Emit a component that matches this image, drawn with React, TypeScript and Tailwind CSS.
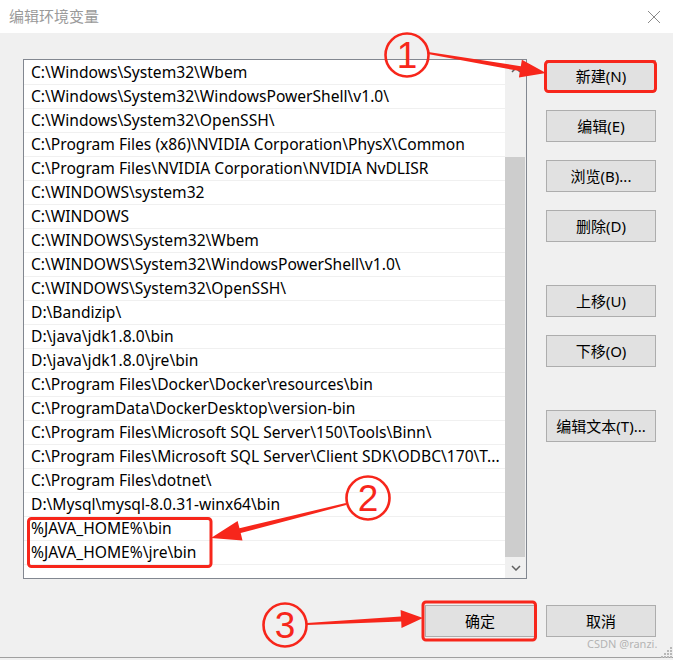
import React from "react";

const rows = [
  "C:\\Windows\\System32\\Wbem",
  "C:\\Windows\\System32\\WindowsPowerShell\\v1.0\\",
  "C:\\Windows\\System32\\OpenSSH\\",
  "C:\\Program Files (x86)\\NVIDIA Corporation\\PhysX\\Common",
  "C:\\Program Files\\NVIDIA Corporation\\NVIDIA NvDLISR",
  "C:\\WINDOWS\\system32",
  "C:\\WINDOWS",
  "C:\\WINDOWS\\System32\\Wbem",
  "C:\\WINDOWS\\System32\\WindowsPowerShell\\v1.0\\",
  "C:\\WINDOWS\\System32\\OpenSSH\\",
  "D:\\Bandizip\\",
  "D:\\java\\jdk1.8.0\\bin",
  "D:\\java\\jdk1.8.0\\jre\\bin",
  "C:\\Program Files\\Docker\\Docker\\resources\\bin",
  "C:\\ProgramData\\DockerDesktop\\version-bin",
  "C:\\Program Files\\Microsoft SQL Server\\150\\Tools\\Binn\\",
  "C:\\Program Files\\Microsoft SQL Server\\Client SDK\\ODBC\\170\\T...",
  "C:\\Program Files\\dotnet\\",
  "D:\\Mysql\\mysql-8.0.31-winx64\\bin",
  "%JAVA_HOME%\\bin",
  "%JAVA_HOME%\\jre\\bin",
];

const RED = "#f7261b";

function Btn({ label }: { label: string }) {
  return (
    <div className="w-[110px] h-[32px] bg-[#e1e1e1] border border-[#adadad] flex items-center justify-center text-[15px] text-black">
      {label}
    </div>
  );
}

function arrowPoints(ax: number, ay: number, bx: number, by: number, w0: number, w1: number, L: number, H: number) {
  const dx = bx - ax;
  const dy = by - ay;
  const len = Math.hypot(dx, dy);
  const ux = dx / len;
  const uy = dy / len;
  const nx = -uy;
  const ny = ux;
  const hx = bx - ux * L;
  const hy = by - uy * L;
  const pts = [
    [ax + nx * w0 / 2, ay + ny * w0 / 2],
    [hx + nx * w1 / 2, hy + ny * w1 / 2],
    [hx + nx * H, hy + ny * H],
    [bx, by],
    [hx - nx * H, hy - ny * H],
    [hx - nx * w1 / 2, hy - ny * w1 / 2],
    [ax - nx * w0 / 2, ay - ny * w0 / 2],
  ];
  return pts.map((p) => p[0].toFixed(1) + "," + p[1].toFixed(1)).join(" ");
}

function Annotations() {
  const circle = (cx: number, cy: number, n: string) => (
    <g>
      <circle cx={cx} cy={cy} r={21.5} fill="none" stroke={RED} strokeWidth={2.6} />
      <text
        x={cx}
        y={cy + 13}
        textAnchor="middle"
        fill={RED}
        fontSize={37}
        fontFamily="'Liberation Sans', Arial, sans-serif"
      >
        {n}
      </text>
    </g>
  );
  return (
    <svg className="absolute left-0 top-0 pointer-events-none" width={673} height={660}>
      <rect x={545.5} y={61.5} width={110} height={30} rx={3} fill="none" stroke={RED} strokeWidth={3} />
      <rect x={28.5} y={518.5} width={182.5} height={48} rx={3} fill="none" stroke={RED} strokeWidth={3} />
      <rect x={423} y={602} width={112.5} height={38} rx={3} fill="none" stroke={RED} strokeWidth={3} />
      {circle(407, 55, "1")}
      {circle(368, 498, "2")}
      {circle(285, 625, "3")}
      <polygon points={arrowPoints(428, 53, 546, 73, 2, 5, 26, 9)} fill={RED} />
      <polygon points={arrowPoints(346, 504, 211, 538, 2, 5, 30, 10)} fill={RED} />
      <polygon points={arrowPoints(307, 624, 423, 618, 2, 5, 22, 9)} fill={RED} />
    </svg>
  );
}

export default function App() {
  return (
    <div
      className="relative w-[673px] h-[660px] overflow-hidden bg-[#f0f0f0]"
      style={{ fontFamily: "'Noto Sans', 'Noto Sans CJK SC', sans-serif" }}
    >
      {/* title bar */}
      <div className="h-[33px] bg-white flex items-center justify-between pl-[9px] pr-[12px]">
        <span className="text-[15px] text-[#9a9a9a] font-['Noto_Sans_CJK_SC',sans-serif]">编辑环境变量</span>
        <svg width="14" height="14" viewBox="0 0 14 14">
          <path d="M1 1 L13 13 M13 1 L1 13" stroke="#8a8a8a" strokeWidth="1" fill="none" />
        </svg>
      </div>

      {/* body */}
      <div className="h-[625px] border-b border-[#a0a0a0] flex flex-col">
        <div className="flex pt-[26px] pl-[23px]">
          {/* list */}
          <div className="w-[504px] h-[520px] border border-[#828790] bg-white flex">
            <div className="w-[481px] pt-[1px] overflow-hidden">
              {rows.map((r) => (
                <div
                  key={r}
                  className="h-[24px] border-b border-[#f0f0f0] pl-[7px] pt-[1px] flex items-center text-[15.6px] leading-none text-black whitespace-nowrap overflow-hidden"
                >
                  {r}
                </div>
              ))}
            </div>
            <div className="w-[21px] bg-[#f0f0f0] flex flex-col">
              <div className="h-[20px] flex items-center justify-center">
                <svg width="10" height="6" viewBox="0 0 10 6">
                  <path d="M1 5 L5 1 L9 5" stroke="#606060" strokeWidth="1.5" fill="none" />
                </svg>
              </div>
              <div className="h-[77px]" />
              <div className="flex-1 bg-[#cdcdcd] mr-[1px]" />
              <div className="h-[21px] flex items-center justify-center">
                <svg width="10" height="6" viewBox="0 0 10 6">
                  <path d="M1 1 L5 5 L9 1" stroke="#606060" strokeWidth="1.5" fill="none" />
                </svg>
              </div>
            </div>
          </div>

          {/* side buttons */}
          <div className="ml-[19px] pt-[1px] flex flex-col">
            <Btn label="新建(N)" />
            <div className="h-[18px]" />
            <Btn label="编辑(E)" />
            <div className="h-[18px]" />
            <Btn label="浏览(B)..." />
            <div className="h-[18px]" />
            <Btn label="删除(D)" />
            <div className="h-[43px]" />
            <Btn label="上移(U)" />
            <div className="h-[18px]" />
            <Btn label="下移(O)" />
            <div className="h-[43px]" />
            <Btn label="编辑文本(T)..." />
          </div>
        </div>

        {/* bottom buttons */}
        <div className="flex justify-end gap-[11px] pr-[17px] mt-[26px]">
          <Btn label="确定" />
          <Btn label="取消" />
        </div>
      </div>

      <span className="absolute left-[587px] top-[638px] text-[11px] text-[#b4b4b4] leading-none">CSDN @ranzi.</span>
      <svg className="absolute left-[661px] top-[646px]" width="12" height="12" viewBox="0 0 12 12">
        {[
          [9, 1], [6, 4], [9, 4], [3, 7], [6, 7], [9, 7], [0, 10], [3, 10], [6, 10], [9, 10],
        ].map(([x, y], i) => (
          <rect key={i} x={x} y={y} width={2} height={2} fill="#b8b8b8" />
        ))}
      </svg>

      <Annotations />
    </div>
  );
}
